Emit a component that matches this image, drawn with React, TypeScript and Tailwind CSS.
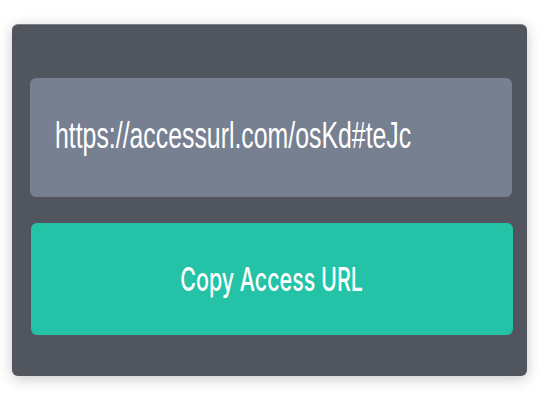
import React from "react";

export default function App() {
  return (
    <div className="w-[540px] h-[400px] bg-white pt-[24px] pl-[12px] overflow-hidden">
      <div className="w-[515px] h-[352px] rounded-[6px] bg-[#51555d] border-t border-[#7c8088] shadow-[0_3px_14px_rgba(0,0,0,0.22)] pt-[53px] pl-[18px] pr-[15px] flex flex-col gap-[26px]">
        <div className="h-[119px] rounded-[6px] bg-[#778091] flex items-center pl-[25px] overflow-hidden">
          <span
            className="block origin-left scale-x-[0.69] whitespace-nowrap text-white text-[36px] leading-none -translate-y-[2px]"
            style={{ fontFamily: '"Liberation Sans", Arial, sans-serif' }}
          >
            https://accessurl.com/osKd#teJc
          </span>
        </div>
        <div className="h-[112px] ml-[1px] -mr-[1px] rounded-[6px] bg-[#24c2a6] flex items-center justify-center">
          <span
            className="block scale-x-[0.65] whitespace-nowrap text-white text-[33px] font-medium leading-none"
            style={{ fontFamily: 'Inter, "Liberation Sans", sans-serif' }}
          >
            Copy Access URL
          </span>
        </div>
      </div>
    </div>
  );
}
